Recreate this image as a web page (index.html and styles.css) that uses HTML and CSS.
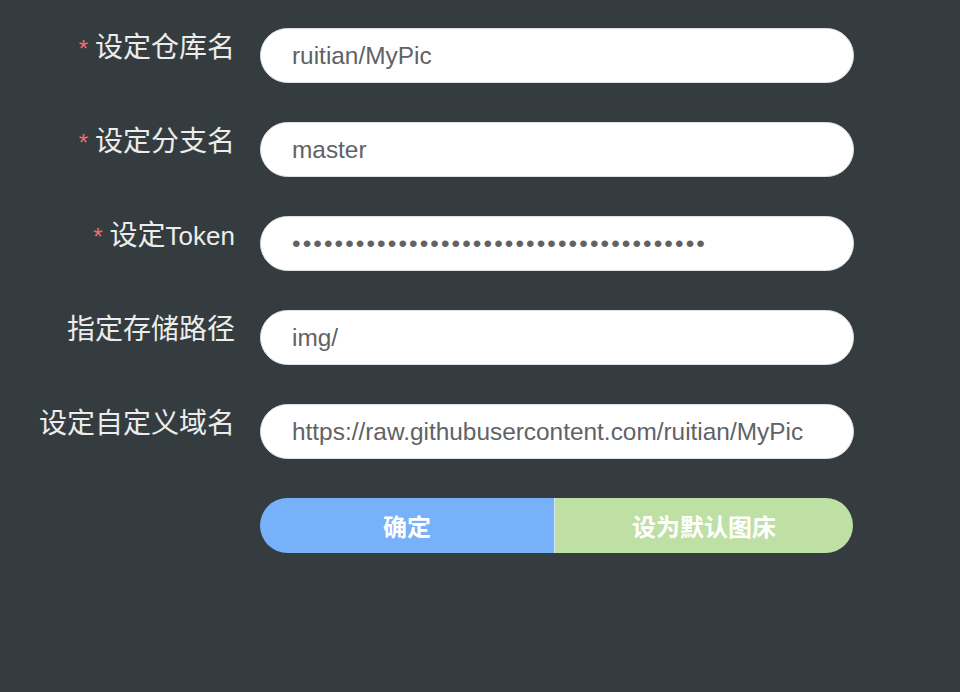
FILE: index.html
```html
<!DOCTYPE html>
<html lang="zh">
<head>
<meta charset="utf-8">
<title>设定图床</title>
<link rel="stylesheet" href="styles.css">
</head>
<body>
<form class="form">
  <label class="label"><span class="req">*</span>设定仓库名</label>
  <input class="input" type="text" value="ruitian/MyPic">
  <label class="label"><span class="req">*</span>设定分支名</label>
  <input class="input" type="text" value="master">
  <label class="label"><span class="req">*</span>设定<span class="latin">Token</span></label>
  <input class="input input-pass" type="password" value="012345678901234567890123456789012345678">
  <label class="label">指定存储路径</label>
  <input class="input" type="text" value="img/">
  <label class="label">设定自定义域名</label>
  <input class="input" type="text" value="https://raw.githubusercontent.com/ruitian/MyPic">
  <div class="label"></div>
  <div class="btn-group">
    <button type="button" class="btn btn-primary">确定</button>
    <button type="button" class="btn btn-success">设为默认图床</button>
  </div>
</form>
</body>
</html>
```
FILE: styles.css
```css
html, body {
  margin: 0;
  padding: 0;
  background: #343c3f;
  height: 100%;
}
body {
  font-family: "Liberation Sans", "Noto Sans CJK SC", sans-serif;
}
.form {
  display: grid;
  grid-template-columns: 235px 594px;
  column-gap: 25px;
  row-gap: 39px;
  padding-top: 28px;
}
.label {
  text-align: right;
  color: #ececec;
  font-size: 28px;
  line-height: 39px;
  white-space: nowrap;
}
.latin {
  font-size: 26px;
}
.req {
  color: #f56c6c;
  margin-right: 7px;
  font-size: 24px;
}
.input {
  box-sizing: border-box;
  height: 55px;
  width: 594px;
  border: 1px solid #dcdfe6;
  border-radius: 28px;
  background: #fff;
  padding: 0 31px;
  font-family: "Liberation Sans", "Noto Sans CJK SC", sans-serif;
  font-size: 24.4px;
  color: #606266;
  outline: none;
  margin: 0;
}
.input-pass {
  letter-spacing: 2.1px;
}
.btn-group {
  display: flex;
  width: 593px;
  height: 55px;
  border-radius: 28px;
  overflow: hidden;
}
.btn {
  border: none;
  margin: 0;
  padding: 0;
  font-family: "Liberation Sans", "Noto Sans CJK SC", sans-serif;
  font-size: 24px;
  font-weight: bold;
  color: #fff;
  cursor: pointer;
}
.btn-primary {
  flex: 0 0 295px;
  background: #77b1f9;
  border-right: 1px solid #d4e6f6;
}
.btn-success {
  flex: 1;
  background: #bfe0a4;
}
```
